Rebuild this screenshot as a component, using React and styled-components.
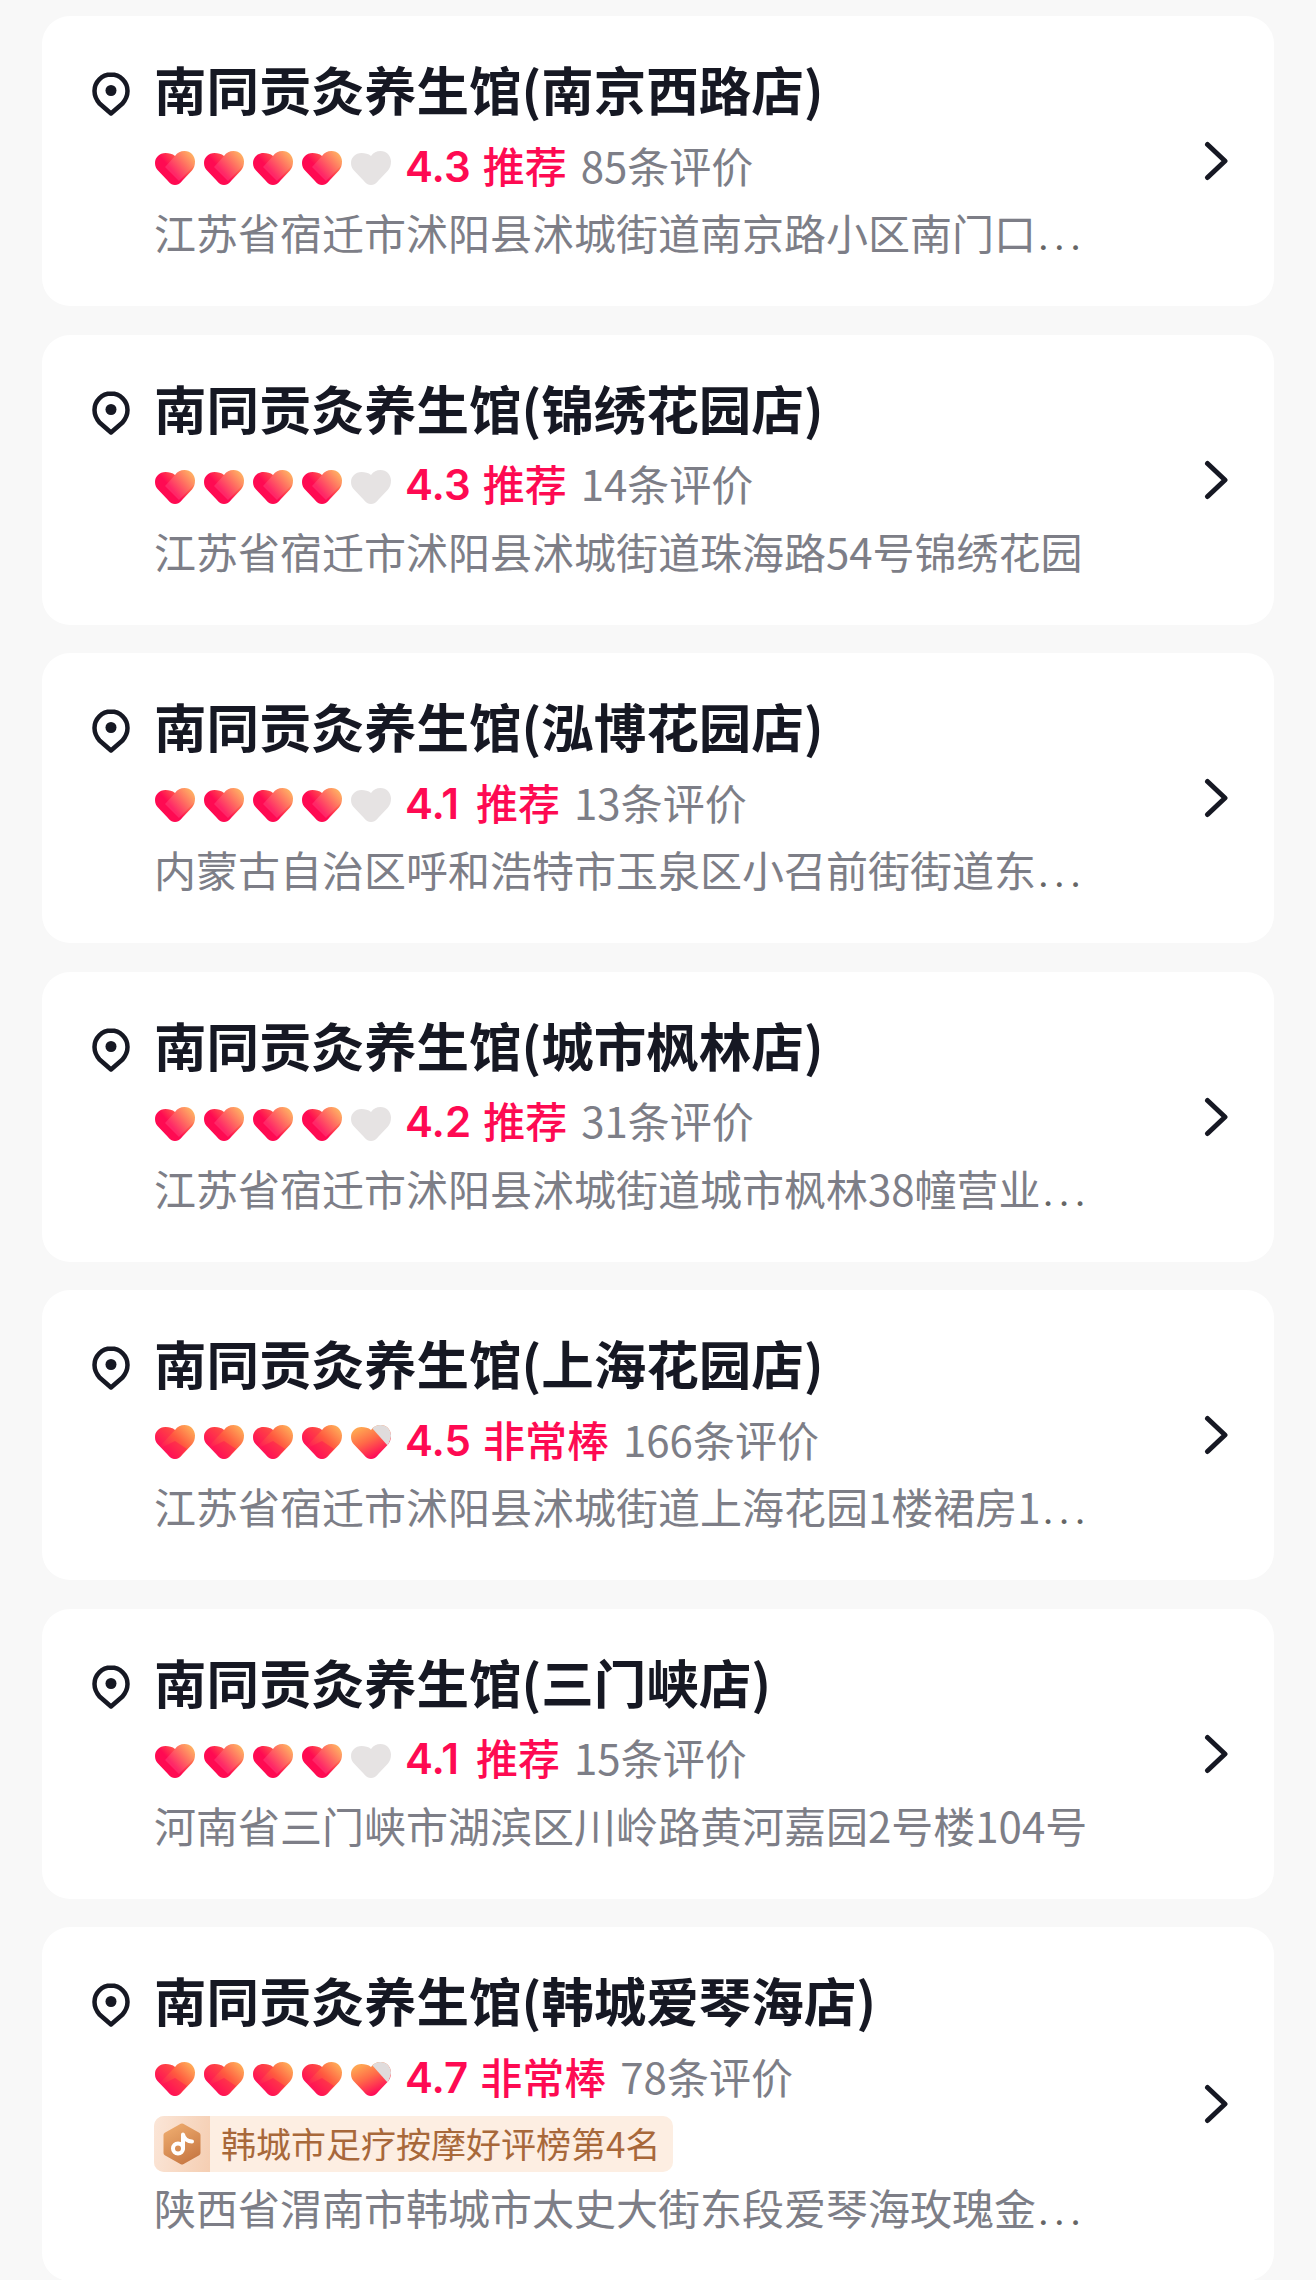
import React, { useId } from 'react'
import styled, { createGlobalStyle } from 'styled-components'

const GlobalStyle = createGlobalStyle`
  html, body {
    margin: 0;
    padding: 0;
    background: #f8f8f8;
  }
  #root {
    height: 2280px;
    overflow: hidden;
  }
`

const FONT = `"Noto Sans CJK SC", "Noto Sans", sans-serif`

const List = styled.div`
  display: flex;
  flex-direction: column;
  gap: 28.500px;
  padding: 16px 42px 0;
  font-family: ${FONT};
`

const Card = styled.div`
  display: flex;
  align-items: center;
  background: #fff;
  border-radius: 28px;
  padding: 42px 46px 52px 50px;
  flex: none;
`

const PinCol = styled.div`
  align-self: flex-start;
  width: 63px;
  margin-right: -1px;
  flex: none;
  padding-top: 14px;
  line-height: 0;
`

const Body = styled.div`
  flex: 1;
  min-width: 0;
`

const Title = styled.div`
  font-size: 52.500px;
  line-height: 60px;
  font-weight: 700;
  color: #161823;
  white-space: nowrap;
`

const RatingRow = styled.div`
  display: flex;
  align-items: center;
  height: 48px;
  margin: 24px 0 20px;
`

const Hearts = styled.div`
  display: flex;
  gap: 9px;
  margin: 4px 14px 0 1px;
  line-height: 0;
`

const RatingText = styled.div`
  display: flex;
  align-items: center;
  padding-bottom: 4px;
  white-space: nowrap;
`

const Score = styled.span`
  font-family: Inter, ${FONT};
  font-size: 42px;
  font-weight: 600;
  color: #fe0a52;
  min-width: 59px;
  margin: 4px 12px 0 0;
`

const Label = styled.span`
  font-size: 42px;
  font-weight: 500;
  color: #fe0a52;
  margin-right: 14px;
`

const Count = styled.span`
  font-size: 42px;
  color: #7d7e87;
`

const Badge = styled.div`
  display: flex;
  align-items: center;
  width: fit-content;
  height: 56px;
  margin: -5px 0 13px;
  padding-right: 13px;
  border-radius: 10px;
  overflow: hidden;
  background: #fdeee2;
`

const BadgeIcon = styled.div`
  display: flex;
  align-items: center;
  justify-content: center;
  width: 56px;
  height: 100%;
  margin-right: 11px;
  background: linear-gradient(100deg, #fbe6d8, #f5ceb2);
`

const BadgeText = styled.span`
  font-size: 35px;
  padding-bottom: 4px;
  color: #a8683a;
  white-space: nowrap;
`

const Address = styled.div`
  font-size: 42px;
  line-height: 44px;
  color: #7d7e87;
  white-space: nowrap;
`

const Dots = styled.span`
  font-family: Roboto, sans-serif;
  line-height: 0;
  letter-spacing: 5px;
  color: #666;
  margin-left: 2px;
`

const Chevron = styled.div`
  flex: none;
  line-height: 0;
  margin-top: 10px;
`

function Pin() {
  return (
    <svg width="38" height="44" viewBox="0 0 38 44" fill="none">
      <path
        d="M19 2.500C9.900 2.500 2.500 9.900 2.500 19c0 5 2 8.900 5 12.500L19 41.500l11.500-10c3-3.600 5-7.500 5-12.500C35.500 9.900 28.100 2.500 19 2.500z"
        stroke="#161823"
        strokeWidth="4.500"
        strokeLinejoin="round"
      />
      <circle cx="19" cy="18.500" r="5.500" fill="#161823" />
    </svg>
  )
}

function ChevronIcon() {
  return (
    <svg width="24" height="40" viewBox="0 0 24 40" fill="none">
      <path d="M3.500 3.500L21 20L3.500 36.500" stroke="#161823" strokeWidth="5" strokeLinecap="round" strokeLinejoin="round" />
    </svg>
  )
}

const HEART = 'M20 5C17.500 2.800 14 2 10.500 2C4.500 2 0 6.500 0 12C0 15 1.200 17.500 3 19.500L12.500 29.500C17 35.500 23 35.500 27.500 29.500L37 19.500C39 17.200 40 14 40 10.500C40 4.700 35.500 0 29.500 0C25.700 0 22.300 1.800 20 5Z'

const HEART_FILL = {
  full: { from: [6, 28], to: [36, 2], stops: [[0.35, '#ff0a52'], [0.68, '#ff5a4c'], [1, '#ffa64e']] },
  rich: { from: [8, 30], to: [36, 2], stops: [[0.1, '#ff1458'], [0.55, '#ff5a40'], [1, '#ffac58']] },
  half: { from: [8, 4], to: [22, 33], stops: [[0, '#ffa552'], [0.45, '#ff6a48'], [1, '#ff0a58']] },
}

// kind: full (low scores), rich (4.5+), half (last heart of 4.5+), empty
function Heart({ kind }) {
  const id = useId()
  if (kind === 'empty') {
    return (
      <svg width="40" height="34" viewBox="0 0 40 34">
        <path d={HEART} fill="#e6e3e3" />
      </svg>
    )
  }
  const fill = HEART_FILL[kind]
  return (
    <svg width="40" height="34" viewBox="0 0 40 34">
      <defs>
        <linearGradient id={id + 'g'} x1={fill.from[0]} y1={fill.from[1]} x2={fill.to[0]} y2={fill.to[1]} gradientUnits="userSpaceOnUse">
          {fill.stops.map(([o, c]) => (
            <stop key={o} offset={o} stopColor={c} />
          ))}
        </linearGradient>
        <clipPath id={id + 'c'}>
          <path d={HEART} />
        </clipPath>
      </defs>
      <path d={HEART} fill={`url(#${id}g)`} />
      <g clipPath={`url(#${id}c)`}>
        {kind === 'full' && <path d="M20 5L10 16L24 30L40 14V0H24z" fill="#fff" opacity="0.12" />}
        {kind === 'rich' && <path d="M20 5L0 26V0H20z" fill="#ff0a52" opacity="0.3" />}
        {kind === 'rich' && <path d="M20 36L8 22L20 16L32 24z" fill="#ff0a52" opacity="0.4" />}
        {kind === 'half' && <path d="M21 3L37 21L44 0H21z" fill="#e0dcdc" />}
      </g>
    </svg>
  )
}

function BadgeLogo() {
  return (
    <svg width="38" height="42" viewBox="0 0 38 42" fill="none">
      <defs>
        <linearGradient id="hexFill" x1="0.2" y1="0" x2="0.7" y2="1">
          <stop offset="0" stopColor="#eca96c" />
          <stop offset="1" stopColor="#c97a45" />
        </linearGradient>
      </defs>
      <path d="M19 3L35 12V30L19 39L3 30V12z" fill="url(#hexFill)" stroke="url(#hexFill)" strokeWidth="5" strokeLinejoin="round" />
      <circle cx="15" cy="25.500" r="5" stroke="#fff" strokeWidth="4" />
      <path d="M20 25.500V11.500C21 16 25 18.500 29 18.500" stroke="#fff" strokeWidth="4" strokeLinecap="round" strokeLinejoin="round" />
    </svg>
  )
}

const stores = [
  { name: '南同贡灸养生馆(南京西路店)', score: '4.3', label: '推荐', count: '85条评价', address: '江苏省宿迁市沭阳县沭城街道南京路小区南门口', more: true },
  { name: '南同贡灸养生馆(锦绣花园店)', score: '4.3', label: '推荐', count: '14条评价', address: '江苏省宿迁市沭阳县沭城街道珠海路54号锦绣花园' },
  { name: '南同贡灸养生馆(泓博花园店)', score: '4.1', label: '推荐', count: '13条评价', address: '内蒙古自治区呼和浩特市玉泉区小召前街街道东', more: true },
  { name: '南同贡灸养生馆(城市枫林店)', score: '4.2', label: '推荐', count: '31条评价', address: '江苏省宿迁市沭阳县沭城街道城市枫林38幢营业', more: true },
  { name: '南同贡灸养生馆(上海花园店)', score: '4.5', label: '非常棒', count: '166条评价', address: '江苏省宿迁市沭阳县沭城街道上海花园1楼裙房1', more: true },
  { name: '南同贡灸养生馆(三门峡店)', score: '4.1', label: '推荐', count: '15条评价', address: '河南省三门峡市湖滨区川岭路黄河嘉园2号楼104号' },
  { name: '南同贡灸养生馆(韩城爱琴海店)', score: '4.7', label: '非常棒', count: '78条评价', badge: '韩城市足疗按摩好评榜第4名', address: '陕西省渭南市韩城市太史大街东段爱琴海玫瑰金', more: true },
]

function heartKinds(score) {
  const rich = Number(score) >= 4.5
  return rich ? ['rich', 'rich', 'rich', 'rich', 'half'] : ['full', 'full', 'full', 'full', 'empty']
}

export default function App() {
  return (
    <>
      <GlobalStyle />
      <List>
        {stores.map((s) => (
          <Card key={s.name}>
            <PinCol>
              <Pin />
            </PinCol>
            <Body>
              <Title>{s.name}</Title>
              <RatingRow>
                <Hearts>
                  {heartKinds(s.score).map((k, i) => (
                    <Heart key={i} kind={k} />
                  ))}
                </Hearts>
                <RatingText>
                  <Score>{s.score}</Score>
                  <Label>{s.label}</Label>
                  <Count>{s.count}</Count>
                </RatingText>
              </RatingRow>
              {s.badge && (
                <Badge>
                  <BadgeIcon>
                    <BadgeLogo />
                  </BadgeIcon>
                  <BadgeText>{s.badge}</BadgeText>
                </Badge>
              )}
              <Address>
                {s.address}
                {s.more && <Dots>...</Dots>}
              </Address>
            </Body>
            <Chevron>
              <ChevronIcon />
            </Chevron>
          </Card>
        ))}
      </List>
    </>
  )
}
